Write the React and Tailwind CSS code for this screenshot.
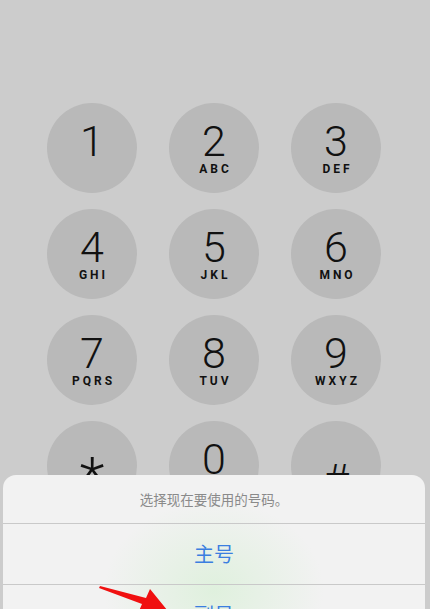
import React from "react";

const KEYS = [
  ["1", ""],
  ["2", "ABC"],
  ["3", "DEF"],
  ["4", "GHI"],
  ["5", "JKL"],
  ["6", "MNO"],
  ["7", "PQRS"],
  ["8", "TUV"],
  ["9", "WXYZ"],
  ["*", ""],
  ["0", ""],
  ["#", ""],
];

function Key({ digit, letters }) {
  const symbol = digit === "*" || digit === "#";
  return (
    <div className="w-[90px] h-[90px] rounded-full bg-[#b9b9b9] flex flex-col items-center pt-[17px]">
      {symbol ? (
        <span
          className={
            digit === "*"
              ? "text-[58px] leading-none font-light text-[#111] mt-[11px]"
              : "text-[44px] leading-none font-light text-[#111] mt-[21px]"
          }
        >
          {digit}
        </span>
      ) : (
        <span className="text-[43px] leading-[42px] font-light text-[#111]">{digit}</span>
      )}
      {letters && (
        <span className="text-[12px] leading-[14px] font-bold tracking-[3px] pl-[3px] text-[#111]">
          {letters}
        </span>
      )}
    </div>
  );
}

export default function App() {
  return (
    <div
      className="relative w-[430px] h-[609px] overflow-hidden bg-[#cccccc]"
      style={{ fontFamily: "Roboto, 'Noto Sans CJK SC', sans-serif" }}
    >
      {/* keypad */}
      <div className="grid grid-cols-[90px_90px_90px] gap-x-[32px] gap-y-[16px] pl-[47px] pt-[103px]">
        {KEYS.map(([d, l]) => (
          <Key key={d} digit={d} letters={l} />
        ))}
      </div>

      {/* action sheet */}
      <div className="absolute left-[3px] top-[475px] w-[422px] h-[160px] rounded-[13px] overflow-hidden bg-[#f2f2f2]">
        <div className="absolute inset-0 bg-[radial-gradient(ellipse_110px_90px_at_50%_72%,rgba(220,240,218,0.85),rgba(242,242,242,0))]" />
        <div className="relative flex flex-col">
          <div className="h-[48px] flex items-center justify-center text-[13.5px] text-[#8a8a8a] font-['Noto_Sans_CJK_SC']">
            选择现在要使用的号码。
          </div>
          <div className="h-px bg-[#c9c9c9]" />
          <div className="h-[60px] flex items-center justify-center text-[20px] text-[#3b7ee0] font-['Noto_Sans_CJK_SC']">
            主号
          </div>
          <div className="h-px bg-[#c9c9c9]" />
          <div className="h-[60px] flex items-center justify-center text-[20px] text-[#3b7ee0] font-['Noto_Sans_CJK_SC']">
            副号
          </div>
        </div>
      </div>

      {/* red pointer arrow */}
      <svg className="absolute left-0 top-0 pointer-events-none" width="430" height="609" viewBox="0 0 430 609">
        <polygon
          points="100,586 146,598 150,589 172,616 136,618 142,604 99,588"
          fill="#f01010"
        />
      </svg>
    </div>
  );
}
